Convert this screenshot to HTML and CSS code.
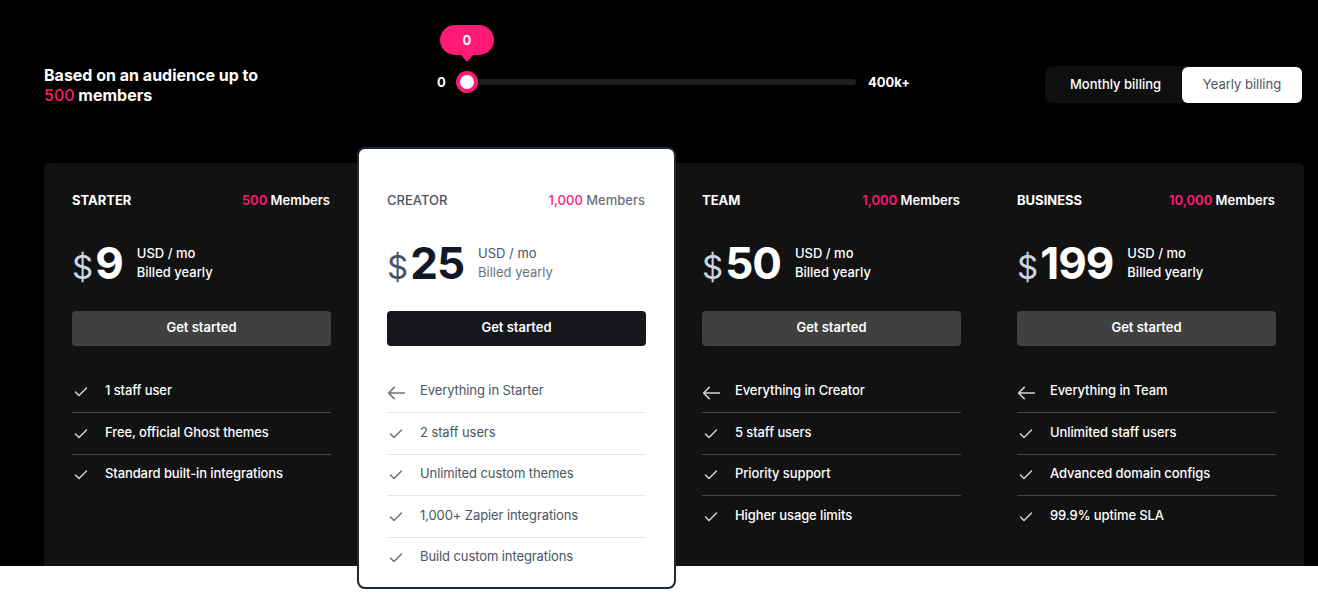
FILE: index.html
```html
<!DOCTYPE html>
<html lang="en">
<head>
<meta charset="utf-8">
<title>Pricing</title>
<link rel="stylesheet" href="styles.css">
</head>
<body>
<section class="hero">
  <div class="topbar">
    <p class="audience">Based on an audience up to<br><span class="pink light">500</span> members</p>
    <div class="slider">
      <span class="slider-label">0</span>
      <div class="track">
        <div class="thumb"><div class="bubble">0</div></div>
      </div>
      <span class="slider-label">400k+</span>
    </div>
    <div class="billing">
      <button class="bill">Monthly billing</button>
      <button class="bill active">Yearly billing</button>
    </div>
  </div>

  <div class="plans">
    <div class="plan">
      <div class="plan-head"><span class="plan-name">STARTER</span><span class="plan-members"><span class="pink">500</span> Members</span></div>
      <div class="price"><span class="amount"><span class="cur">$</span>9</span><span class="per">USD / mo<br><span class="billed">Billed yearly</span></span></div>
      <button class="cta">Get started</button>
      <ul class="features">
        <li><svg class="ico" viewBox="0 0 18 20"><path d="M3.5 12 L7 15.5 L14.5 8"/></svg><span>1 staff user</span></li>
        <li><svg class="ico" viewBox="0 0 18 20"><path d="M3.5 12 L7 15.5 L14.5 8"/></svg><span>Free, official Ghost themes</span></li>
        <li><svg class="ico" viewBox="0 0 18 20"><path d="M3.5 12 L7 15.5 L14.5 8"/></svg><span>Standard built-in integrations</span></li>
      </ul>
    </div>

    <div class="plan featured">
      <div class="plan-head"><span class="plan-name">CREATOR</span><span class="plan-members"><span class="pink">1,000</span> Members</span></div>
      <div class="price"><span class="amount"><span class="cur">$</span>25</span><span class="per">USD / mo<br><span class="billed">Billed yearly</span></span></div>
      <button class="cta">Get started</button>
      <ul class="features">
        <li><svg class="ico" viewBox="0 0 18 20"><path d="M17.5 13 H1.8 M7.2 7.4 L1.6 13 L7.2 18.6"/></svg><span>Everything in Starter</span></li>
        <li><svg class="ico" viewBox="0 0 18 20"><path d="M3.5 12 L7 15.5 L14.5 8"/></svg><span>2 staff users</span></li>
        <li><svg class="ico" viewBox="0 0 18 20"><path d="M3.5 12 L7 15.5 L14.5 8"/></svg><span>Unlimited custom themes</span></li>
        <li><svg class="ico" viewBox="0 0 18 20"><path d="M3.5 12 L7 15.5 L14.5 8"/></svg><span>1,000+ Zapier integrations</span></li>
        <li><svg class="ico" viewBox="0 0 18 20"><path d="M3.5 12 L7 15.5 L14.5 8"/></svg><span>Build custom integrations</span></li>
      </ul>
    </div>

    <div class="plan">
      <div class="plan-head"><span class="plan-name">TEAM</span><span class="plan-members"><span class="pink">1,000</span> Members</span></div>
      <div class="price"><span class="amount"><span class="cur">$</span>50</span><span class="per">USD / mo<br><span class="billed">Billed yearly</span></span></div>
      <button class="cta">Get started</button>
      <ul class="features">
        <li><svg class="ico" viewBox="0 0 18 20"><path d="M17.5 13 H1.8 M7.2 7.4 L1.6 13 L7.2 18.6"/></svg><span>Everything in Creator</span></li>
        <li><svg class="ico" viewBox="0 0 18 20"><path d="M3.5 12 L7 15.5 L14.5 8"/></svg><span>5 staff users</span></li>
        <li><svg class="ico" viewBox="0 0 18 20"><path d="M3.5 12 L7 15.5 L14.5 8"/></svg><span>Priority support</span></li>
        <li><svg class="ico" viewBox="0 0 18 20"><path d="M3.5 12 L7 15.5 L14.5 8"/></svg><span>Higher usage limits</span></li>
      </ul>
    </div>

    <div class="plan">
      <div class="plan-head"><span class="plan-name">BUSINESS</span><span class="plan-members"><span class="pink">10,000</span> Members</span></div>
      <div class="price"><span class="amount"><span class="cur">$</span>199</span><span class="per">USD / mo<br><span class="billed">Billed yearly</span></span></div>
      <button class="cta">Get started</button>
      <ul class="features">
        <li><svg class="ico" viewBox="0 0 18 20"><path d="M17.5 13 H1.8 M7.2 7.4 L1.6 13 L7.2 18.6"/></svg><span>Everything in Team</span></li>
        <li><svg class="ico" viewBox="0 0 18 20"><path d="M3.5 12 L7 15.5 L14.5 8"/></svg><span>Unlimited staff users</span></li>
        <li><svg class="ico" viewBox="0 0 18 20"><path d="M3.5 12 L7 15.5 L14.5 8"/></svg><span>Advanced domain configs</span></li>
        <li><svg class="ico" viewBox="0 0 18 20"><path d="M3.5 12 L7 15.5 L14.5 8"/></svg><span>99.9% uptime SLA</span></li>
      </ul>
    </div>
  </div>
</section>
<div class="below"></div>
</body>
</html>
```

FILE: styles.css
```css
* { box-sizing: border-box; }

html, body {
  margin: 0;
  padding: 0;
  background: #ffffff;
  font-family: Inter, "Noto Sans", "Liberation Sans", sans-serif;
  -webkit-font-smoothing: antialiased;
}

body { min-height: 604px; }

.below { height: 38px; }

.pink { color: #ff1a75; }
.light { font-weight: 500; }

.hero {
  background: #000000;
  color: #ffffff;
}

/* ---------- top bar ---------- */
.topbar {
  display: flex;
  align-items: flex-start;
  padding: 65px 16px 0 44px;
}

.audience {
  flex: 0 0 393px;
  margin: 0;
  font-size: 16px;
  line-height: 20px;
  font-weight: 700;
}

.slider {
  flex: 0 0 473px;
  display: flex;
  align-items: center;
  gap: 10px;
  height: 22px;
  margin-top: 6px;
}

.slider-label {
  font-size: 13px;
  font-weight: 700;
  line-height: 20px;
}

.track {
  position: relative;
  flex: 1;
  height: 6px;
  border-radius: 3px;
  background: #1e1e1e;
  margin-right: 2px;
}

.thumb {
  position: absolute;
  left: 0;
  top: -8px;
  width: 22px;
  height: 22px;
  border-radius: 50%;
  background: #ffffff;
  border: 4px solid #ff1a75;
}

.bubble {
  position: absolute;
  left: 50%;
  top: -50px;
  width: 54px;
  height: 30px;
  margin-left: -27px;
  border-radius: 15px;
  background: #ff1a75;
  color: #ffffff;
  font-size: 13px;
  font-weight: 700;
  line-height: 30px;
  text-align: center;
}

.bubble::after {
  content: "";
  position: absolute;
  left: 50%;
  top: 100%;
  margin-left: -6px;
  border-left: 6px solid transparent;
  border-right: 6px solid transparent;
  border-top: 7px solid #ff1a75;
}

.billing {
  margin-left: auto;
  margin-top: 1px;
  display: flex;
  align-items: center;
  height: 37px;
  border-radius: 7px;
  background: #0f0f0f;
}

.bill {
  border: 0;
  background: transparent;
  font-family: inherit;
  font-size: 13px;
  line-height: 20px;
  height: 36px;
  padding: 0 0 1px;
  cursor: pointer;
}

.bill:first-child {
  width: 137px;
  color: #ffffff;
  font-weight: 500;
  padding-left: 4px;
}

.bill.active {
  width: 120px;
  background: #ffffff;
  color: #4b5563;
  border-radius: 6px;
  font-weight: 400;
}

/* ---------- plans ---------- */
.plans {
  display: grid;
  grid-template-columns: repeat(4, 315px);
  grid-template-rows: 403px;
  width: 1260px;
  margin: 58px 0 0 44px;
  background: #121212;
  border-radius: 6px 6px 0 0;
}

.plan {
  padding: 27px 28px 0;
  min-width: 0;
}

.plan-head {
  display: flex;
  justify-content: space-between;
  font-size: 13px;
  line-height: 20px;
}

.plan-name { font-weight: 700; }
.plan-members { font-weight: 600; margin-right: 1px; }

.price {
  display: flex;
  align-items: center;
  margin-top: 31px;
  height: 44px;
}

.amount {
  font-size: 44px;
  line-height: 1;
  font-weight: 700;
  letter-spacing: -1px;
}

.cur {
  font-size: 33px;
  font-weight: 400;
  color: #cbd5e1;
  margin-right: 2px;
  letter-spacing: 0;
}

.per {
  margin-left: 14px;
  font-size: 13px;
  line-height: 19px;
  font-weight: 500;
}

.cta {
  display: block;
  width: 100%;
  height: 35px;
  margin-top: 26px;
  border: 0;
  border-radius: 4px;
  background: #404040;
  color: #ffffff;
  font-family: inherit;
  font-size: 13px;
  line-height: 20px;
  font-weight: 600;
  padding: 0 0 3px;
  cursor: pointer;
}

.features {
  list-style: none;
  margin: 25.5px 0 0;
  padding: 0;
}

.features li {
  display: flex;
  align-items: flex-start;
  gap: 15px;
  padding: 8.5px 0 12px;
  font-size: 13px;
  line-height: 20px;
  font-weight: 500;
  letter-spacing: -0.1px;
  border-bottom: 1px solid #474747;
}

.features li:last-child { border-bottom: 0; }

.ico {
  flex: 0 0 18px;
  width: 18px;
  height: 20px;
  fill: none;
  stroke: #d4d4d4;
  stroke-width: 1.5;
  stroke-linecap: round;
  stroke-linejoin: round;
}

/* ---------- featured card ---------- */
.featured {
  position: relative;
  z-index: 1;
  align-self: start;
  height: 442px;
  margin: -16px -2px 0;
  padding: 41px 28px 0;
  background: #ffffff;
  border: 2px solid #1f2937;
  border-radius: 8px;
  color: #111827;
}

.featured .plan-name { color: #4b5563; font-weight: 500; }
.featured .plan-members { color: #6b7280; font-weight: 500; }
.featured .cur { color: #475569; }
.featured .amount { color: #111827; }
.featured .per { color: #4b5563; font-weight: 400; }
.featured .billed { color: #6b7280; }
.featured .cta { background: #15171a; }
.featured .features li {
  color: #4b5563;
  font-weight: 400;
  border-bottom-color: #e5e7eb;
}
.featured .ico { stroke: #6b7280; }
```
